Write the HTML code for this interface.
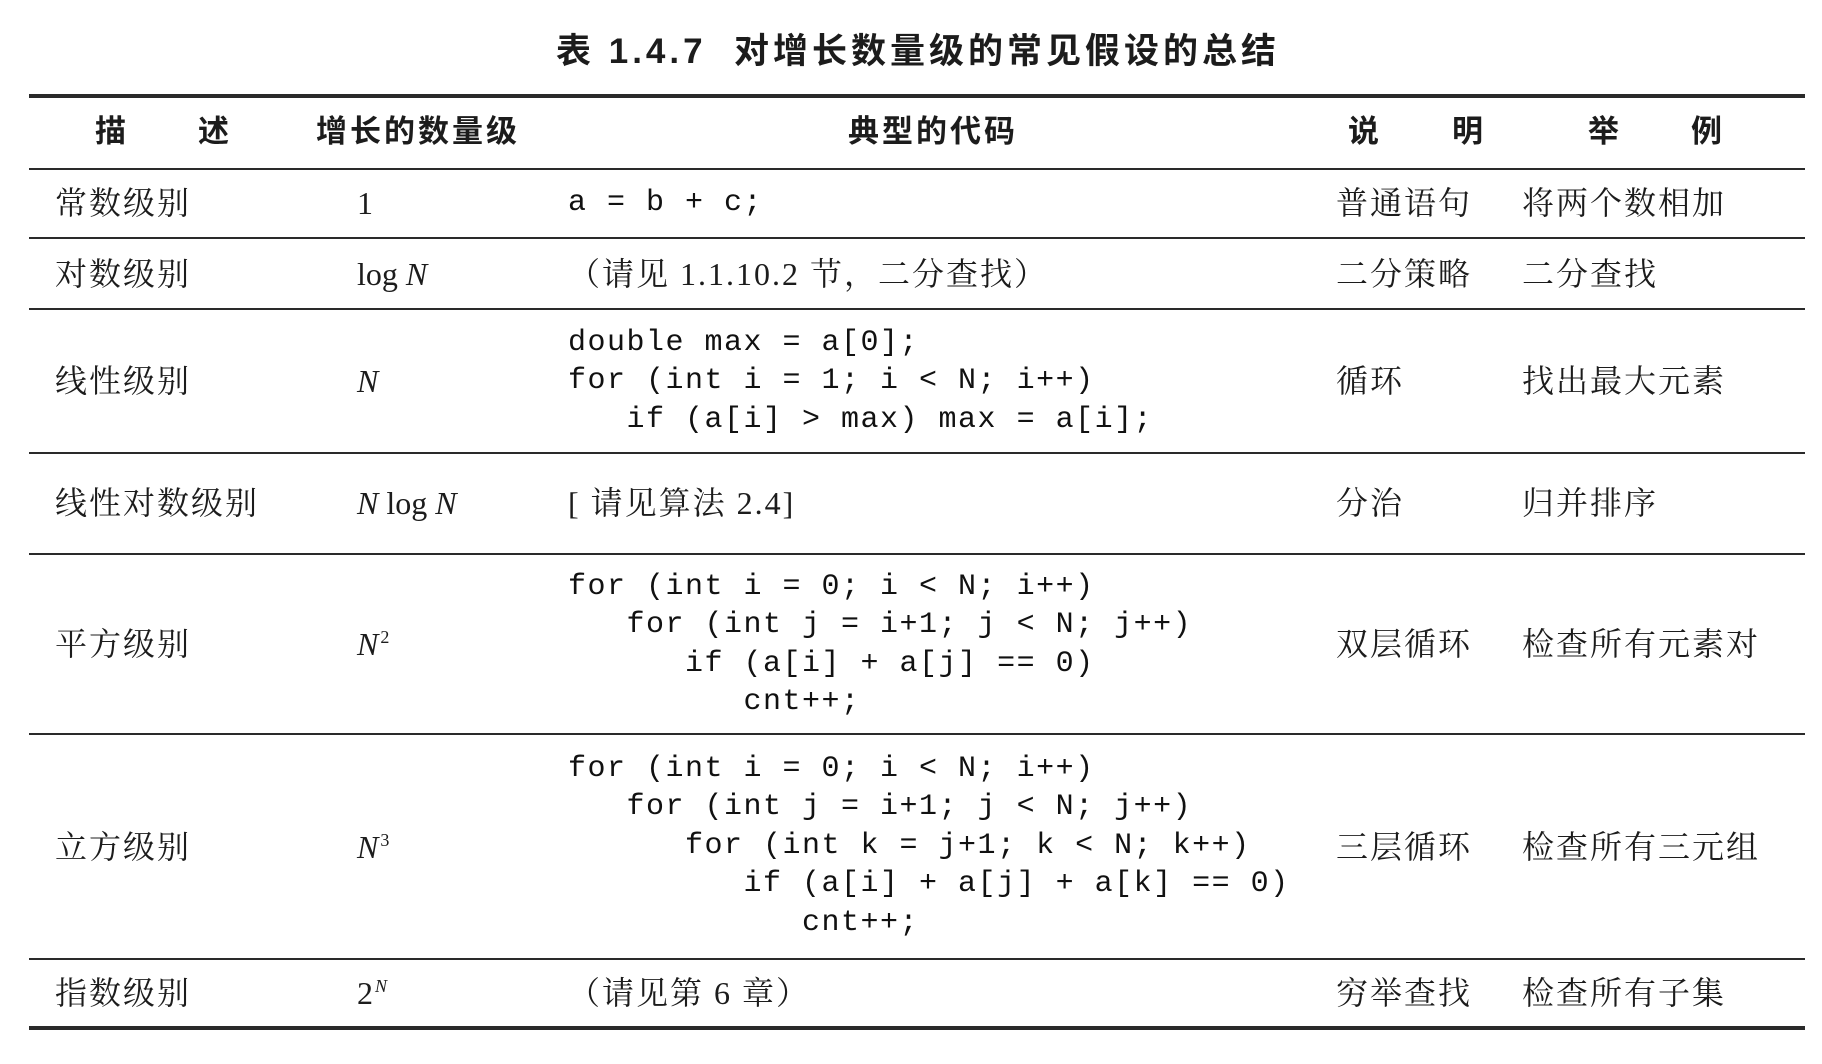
<!DOCTYPE html>
<html><head><meta charset="utf-8"><style>
html,body{margin:0;padding:0;background:#fff;}
body{width:1822px;height:1064px;position:relative;overflow:hidden;color:#1c1c1c;
font-family:"Liberation Serif","Noto Serif CJK SC",serif;}
.t{position:absolute;height:40px;line-height:40px;white-space:nowrap;font-size:32px;letter-spacing:2px;}
.h{font-family:"Liberation Sans","Noto Sans CJK SC",sans-serif;font-weight:bold;font-size:31px;}
.ln{position:absolute;left:29px;width:1776px;background:#2a2a2a;}
.code{position:absolute;left:568px;margin:0;font-family:"Liberation Mono",monospace;font-size:30px;letter-spacing:1.5px;line-height:38.4px;white-space:pre;color:#111;}
i{font-style:italic;}
sup{font-size:18px;vertical-align:12px;line-height:0;}
</style></head><body>
<div class="t h" style="left:556px;top:32px;font-size:35px;letter-spacing:4px;">表 1.4.7&nbsp;&nbsp;对增长数量级的常见假设的总结</div>

<div class="ln" style="top:94px;height:4px;"></div>
<div class="t h" style="left:95px;top:112px;">描</div>
<div class="t h" style="left:198px;top:112px;">述</div>
<div class="t h" style="left:316px;top:112px;letter-spacing:3px;">增长的数量级</div>
<div class="t h" style="left:848px;top:112px;letter-spacing:3px;">典型的代码</div>
<div class="t h" style="left:1348px;top:112px;">说</div>
<div class="t h" style="left:1452px;top:112px;">明</div>
<div class="t h" style="left:1588px;top:112px;">举</div>
<div class="t h" style="left:1691px;top:112px;">例</div>
<div class="ln" style="top:168px;height:2px;"></div>

<div class="t" style="left:55px;top:183px;">常数级别</div>
<div class="t" style="left:357px;top:183px;">1</div>
<pre class="code" style="top:184px;">a = b + c;</pre>
<div class="t" style="left:1336px;top:183px;">普通语句</div>
<div class="t" style="left:1522px;top:183px;">将两个数相加</div>
<div class="ln" style="top:237px;height:2px;"></div>

<div class="t" style="left:55px;top:254px;">对数级别</div>
<div class="t" style="left:357px;top:254px;letter-spacing:0;">log <i>N</i></div>
<div class="t" style="left:568px;top:254px;">（请见 1.1.10.2 节，二分查找）</div>
<div class="t" style="left:1336px;top:254px;">二分策略</div>
<div class="t" style="left:1522px;top:254px;">二分查找</div>
<div class="ln" style="top:308px;height:2px;"></div>

<div class="t" style="left:55px;top:361px;">线性级别</div>
<div class="t" style="left:357px;top:361px;"><i>N</i></div>
<pre class="code" style="top:324px;">double max = a[0];
for (int i = 1; i &lt; N; i++)
   if (a[i] &gt; max) max = a[i];</pre>
<div class="t" style="left:1336px;top:361px;">循环</div>
<div class="t" style="left:1522px;top:361px;">找出最大元素</div>
<div class="ln" style="top:452px;height:2px;"></div>

<div class="t" style="left:55px;top:483px;">线性对数级别</div>
<div class="t" style="left:357px;top:483px;letter-spacing:0;"><i>N</i> log <i>N</i></div>
<div class="t" style="left:568px;top:483px;">[ 请见算法 2.4]</div>
<div class="t" style="left:1336px;top:483px;">分治</div>
<div class="t" style="left:1522px;top:483px;">归并排序</div>
<div class="ln" style="top:553px;height:2px;"></div>

<div class="t" style="left:55px;top:624px;">平方级别</div>
<div class="t" style="left:357px;top:624px;"><i>N</i><sup>2</sup></div>
<pre class="code" style="top:568px;">for (int i = 0; i &lt; N; i++)
   for (int j = i+1; j &lt; N; j++)
      if (a[i] + a[j] == 0)
         cnt++;</pre>
<div class="t" style="left:1336px;top:624px;">双层循环</div>
<div class="t" style="left:1522px;top:624px;">检查所有元素对</div>
<div class="ln" style="top:733px;height:2px;"></div>

<div class="t" style="left:55px;top:827px;">立方级别</div>
<div class="t" style="left:357px;top:827px;"><i>N</i><sup>3</sup></div>
<pre class="code" style="top:750px;">for (int i = 0; i &lt; N; i++)
   for (int j = i+1; j &lt; N; j++)
      for (int k = j+1; k &lt; N; k++)
         if (a[i] + a[j] + a[k] == 0)
            cnt++;</pre>
<div class="t" style="left:1336px;top:827px;">三层循环</div>
<div class="t" style="left:1522px;top:827px;">检查所有三元组</div>
<div class="ln" style="top:958px;height:2px;"></div>

<div class="t" style="left:55px;top:973px;">指数级别</div>
<div class="t" style="left:357px;top:973px;">2<sup><i>N</i></sup></div>
<div class="t" style="left:568px;top:973px;">（请见第 6 章）</div>
<div class="t" style="left:1336px;top:973px;">穷举查找</div>
<div class="t" style="left:1522px;top:973px;">检查所有子集</div>
<div class="ln" style="top:1026px;height:4px;"></div>
</body></html>
